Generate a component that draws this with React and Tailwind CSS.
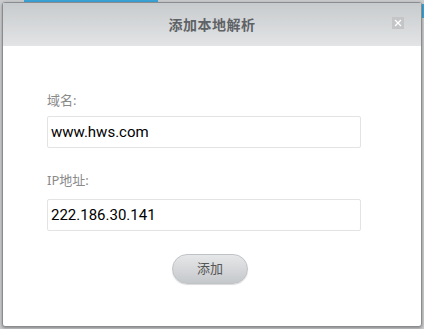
export default function App() {
  const font = { fontFamily: '"Noto Sans", "Noto Sans CJK SC", sans-serif' };
  const inputFont = { fontFamily: 'Roboto, "Noto Sans CJK SC", sans-serif' };

  return (
    <div className="w-[424px] h-[329px] bg-[#c9cbcd] relative overflow-hidden" style={font}>
      {/* page behind */}
      <div className="absolute left-[24px] top-0 w-[134px] h-[3px] bg-[#3aa3d6]" />
      <div className="absolute right-0 top-[4px] w-[3px] h-[14px] bg-[#3aa3d6]" />

      <div className="absolute left-[2px] top-[2px] w-[420px] h-[325px] bg-white border border-[#8a8c8e] rounded-[3px] shadow-[0_1px_3px_rgba(0,0,0,0.35)] flex flex-col">
        {/* header */}
        <div className="h-[43px] bg-gradient-to-b from-[#c8cbcd] to-[#e2e4e6] flex items-center justify-center relative shrink-0">
          <h1 className="text-[14px] font-bold text-[#5f6266] tracking-[0.5px]">添加本地解析</h1>
          <button className="absolute right-[17px] top-[14px] w-[12px] h-[12px] bg-[#c3c5c7] flex items-center justify-center">
            <svg width="8" height="8" viewBox="0 0 8 8">
              <path d="M1 1L7 7M7 1L1 7" stroke="#ffffff" strokeWidth="1.3" />
            </svg>
          </button>
        </div>

        {/* body */}
        <div className="flex flex-col px-[44px] pt-[46px]">
          <label className="text-[13px] text-[#8a8a8a] leading-[16px]">域名:</label>
          <div className="mt-[8px] w-[314px] h-[32px] border border-[#e3e3e3] rounded-[2px] flex items-center px-[3px] text-[15px] text-black" style={inputFont}>
            www.hws.com
          </div>

          <label className="mt-[24px] text-[13px] text-[#8a8a8a] leading-[16px]">IP地址:</label>
          <div className="mt-[11px] w-[314px] h-[32px] border border-[#e3e3e3] rounded-[2px] flex items-center px-[3px] text-[15px] text-black" style={inputFont}>
            222.186.30.141
          </div>

          <div className="flex justify-center mt-[23px] pr-[4px]">
            <button className="w-[76px] h-[30px] rounded-full bg-gradient-to-b from-[#e6e7e9] to-[#c5c8cb] border border-[#c0c3c6] shadow-[0_1px_1px_rgba(0,0,0,0.15)] text-[13px] text-[#555]">
              添加
            </button>
          </div>
        </div>
      </div>
    </div>
  );
}
